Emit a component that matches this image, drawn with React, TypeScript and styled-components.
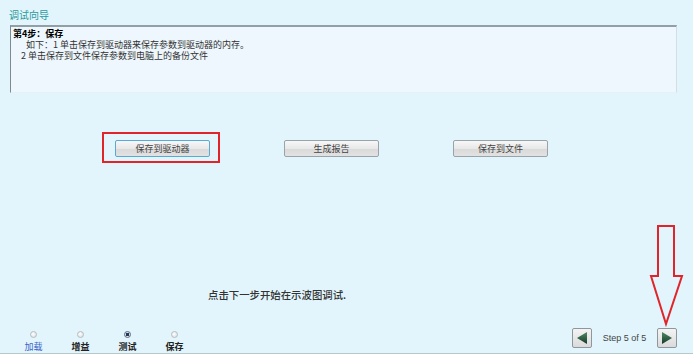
import React from "react";
import styled, { createGlobalStyle } from "styled-components";

const Global = createGlobalStyle`
  html, body { margin: 0; padding: 0; background: #e2f5fc; }
  body { font-family: "Noto Sans CJK SC", "DejaVu Sans", sans-serif; }
`;

const Page = styled.div`
  position: relative;
  width: 693px;
  height: 354px;
  box-sizing: border-box;
  background: #e2f5fc;
  border-bottom: 1px solid #b9c6cc;
  display: flex;
  flex-direction: column;
  overflow: hidden;
`;

const Title = styled.div`
  margin: 8px 0 0 9px;
  height: 14px;
  font-size: 10px;
  line-height: 14px;
  color: #2a9a9c;
`;

const TextBox = styled.div`
  margin: 3px 16px 0 10px;
  height: 68px;
  box-sizing: border-box;
  background: #eef7fd;
  border-top: 2px solid #929fa4;
  border-left: 1px solid #7d8a90;
  border-right: 1px solid #d4dde2;
  border-bottom: 1px solid #e8f0f4;
  padding: 1px 2px;
  font-size: 9px;
  line-height: 11px;
  color: #222;
`;

const Line = styled.div<{ $indent?: number; $bold?: boolean }>`
  height: 11px;
  padding-left: ${(p) => p.$indent ?? 0}px;
  font-weight: ${(p) => (p.$bold ? 700 : 400)};
  color: ${(p) => (p.$bold ? "#000" : "#333")};
  white-space: pre;
`;

const ButtonRow = styled.div`
  display: flex;
  gap: 74px;
  padding-left: 115px;
  margin-top: 47px;
`;

const Cell = styled.div`
  position: relative;
`;

const Highlight = styled.div`
  position: absolute;
  left: -13px;
  top: -8px;
  width: 118px;
  height: 31px;
  box-sizing: border-box;
  border: 2px solid #e0242a;
  pointer-events: none;
`;

const Btn = styled.button<{ $focused?: boolean }>`
  width: 95px;
  height: 17px;
  padding: 0;
  box-sizing: border-box;
  border: 1px solid ${(p) => (p.$focused ? "#5aa9d4" : "#9aa3a8")};
  border-radius: 2px;
  background: linear-gradient(#f7f7f7, #e8e8e8 50%, #d9d9d9 51%, #e2e2e2);
  font-family: "Noto Sans CJK SC", sans-serif;
  font-size: 9px;
  line-height: 15px;
  color: #444;
  display: block;
`;

const Hint = styled.div`
  margin-top: 131px;
  padding-left: 208px;
  font-size: 10.4px;
  line-height: 14px;
  color: #333;
  font-weight: 500;
`;

const Spacer = styled.div`
  flex: 1;
`;

const Footer = styled.div`
  display: flex;
  align-items: flex-end;
  justify-content: space-between;
  padding: 0 16px 0 23px;
  height: 26px;
`;

const Steps = styled.div`
  display: flex;
  gap: 26px;
`;

const Step = styled.div`
  display: flex;
  flex-direction: column;
  align-items: center;
  width: 21px;
`;

const Radio = styled.span<{ $on?: boolean }>`
  width: 7px;
  height: 7px;
  box-sizing: border-box;
  border-radius: 50%;
  border: 1px solid ${(p) => (p.$on ? "#5b6b7c" : "#b5bcc2")};
  background: ${(p) =>
    p.$on
      ? "radial-gradient(circle, #1e3a5e 0 1.6px, #d8dee4 2px)"
      : "radial-gradient(circle at 40% 40%, #ffffff, #d6dadd)"};
`;

const StepLabel = styled.span<{ $link?: boolean }>`
  margin-top: 3px;
  font-size: 9px;
  line-height: 12px;
  white-space: nowrap;
  color: ${(p) => (p.$link ? "#3a63c9" : "#222")};
  font-weight: ${(p) => (p.$link ? 400 : 700)};
`;

const Nav = styled.div`
  display: flex;
  align-items: center;
  margin-bottom: 5px;
`;

const NavBtn = styled.button`
  width: 20px;
  height: 20px;
  padding: 0;
  box-sizing: border-box;
  border: 1px solid #8f979c;
  border-radius: 2px;
  background: linear-gradient(#f4f4f4, #dadada);
  display: flex;
  align-items: center;
  justify-content: center;
`;

const StepText = styled.span`
  width: 65px;
  text-align: center;
  font-family: "Liberation Sans", Arial, sans-serif;
  font-size: 9px;
  color: #444;
`;

const Arrow = styled.svg`
  position: absolute;
  left: 649px;
  top: 224px;
`;

function Tri({ dir }: { dir: "l" | "r" }) {
  return (
    <svg width="14" height="14" viewBox="0 0 14 14">
      <defs>
        <linearGradient id={`g${dir}`} x1="0" y1="0" x2="0" y2="1">
          <stop offset="0" stopColor="#4f8a66" />
          <stop offset="1" stopColor="#173a26" />
        </linearGradient>
      </defs>
      {dir === "l" ? (
        <polygon points="12,1 12,13 2,7" fill={`url(#g${dir})`} />
      ) : (
        <polygon points="2,1 2,13 12,7" fill={`url(#g${dir})`} />
      )}
    </svg>
  );
}

export default function App() {
  return (
    <Page>
      <Global />
      <Title>调试向导</Title>
      <TextBox>
        <Line $bold>第4步：保存</Line>
        <Line $indent={13}>如下：1 单击保存到驱动器来保存参数到驱动器的内存。</Line>
        <Line $indent={8}>2 单击保存到文件保存参数到电脑上的备份文件</Line>
      </TextBox>
      <ButtonRow>
        <Cell>
          <Btn $focused>保存到驱动器</Btn>
          <Highlight />
        </Cell>
        <Cell>
          <Btn>生成报告</Btn>
        </Cell>
        <Cell>
          <Btn>保存到文件</Btn>
        </Cell>
      </ButtonRow>
      <Hint>点击下一步开始在示波图调试.</Hint>
      <Spacer />
      <Footer>
        <Steps>
          <Step>
            <Radio />
            <StepLabel $link>加载</StepLabel>
          </Step>
          <Step>
            <Radio />
            <StepLabel>增益</StepLabel>
          </Step>
          <Step>
            <Radio $on />
            <StepLabel>测试</StepLabel>
          </Step>
          <Step>
            <Radio />
            <StepLabel>保存</StepLabel>
          </Step>
        </Steps>
        <Nav>
          <NavBtn aria-label="previous">
            <Tri dir="l" />
          </NavBtn>
          <StepText>Step 5 of 5</StepText>
          <NavBtn aria-label="next">
            <Tri dir="r" />
          </NavBtn>
        </Nav>
      </Footer>
      <Arrow width="36" height="104" viewBox="0 0 36 104">
        <polygon
          points="9,2 25,2 25,52 33,52 17,100 2,52 9,52"
          fill="none"
          stroke="#e0242a"
          strokeWidth="2"
          strokeLinejoin="miter"
        />
      </Arrow>
    </Page>
  );
}
